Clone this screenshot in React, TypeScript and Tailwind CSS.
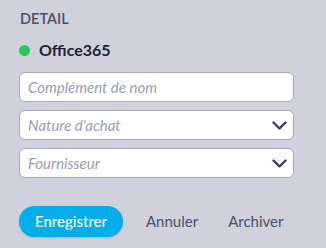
import React from "react";

function Chevron() {
  return (
    <svg width="15" height="9" viewBox="0 0 15 9" fill="none" className="shrink-0">
      <path d="M1.5 1.5 L7.5 7.5 L13.5 1.5" stroke="#3a3e5c" strokeWidth="2.4" strokeLinecap="round" strokeLinejoin="round" />
    </svg>
  );
}

function Field({ label, select }: { label: string; select?: boolean }) {
  return (
    <div className="flex h-[30px] items-center justify-between rounded-[6px] border border-[#a9abbd] bg-white pl-[8px] pr-[6px]">
      <span className="text-[15px] italic text-[#9a9cb5] leading-none">{label}</span>
      {select && <Chevron />}
    </div>
  );
}

export default function App() {
  return (
    <div
      className="flex h-[248px] w-[326px] flex-col bg-[#d0d1dd] pl-[19px] pr-[32px] pt-[10px]"
      style={{ fontFamily: "Lato, 'Liberation Sans', sans-serif" }}
    >
      <div className="h-[17px] pl-[1px] text-[14.5px] font-semibold leading-[17px] text-[#4a4e69]">DETAIL</div>
      <div className="mt-[13px] flex h-[20px] items-center gap-[9px]">
        <span className="h-[11px] w-[11px] rounded-full bg-[#1fcc5c]" />
        <span className="text-[16px] font-bold leading-[20px] text-[#1f2236]">Office365</span>
      </div>
      <div className="mt-[12px] flex flex-col gap-[8px]">
        <Field label="Complément de nom" />
        <Field label="Nature d'achat" select />
        <Field label="Fournisseur" select />
      </div>
      <div className="mt-[28px] flex items-center">
        <button className="h-[31px] w-[104px] rounded-full bg-[#05aeea] text-[15px] font-medium text-white shadow-[0_1px_2px_rgba(0,0,0,0.15)]">
          Enregistrer
        </button>
        <span className="ml-[23px] text-[15px] text-[#4a4e6c]">Annuler</span>
        <span className="ml-[30px] text-[15px] text-[#4a4e6c]">Archiver</span>
      </div>
    </div>
  );
}
